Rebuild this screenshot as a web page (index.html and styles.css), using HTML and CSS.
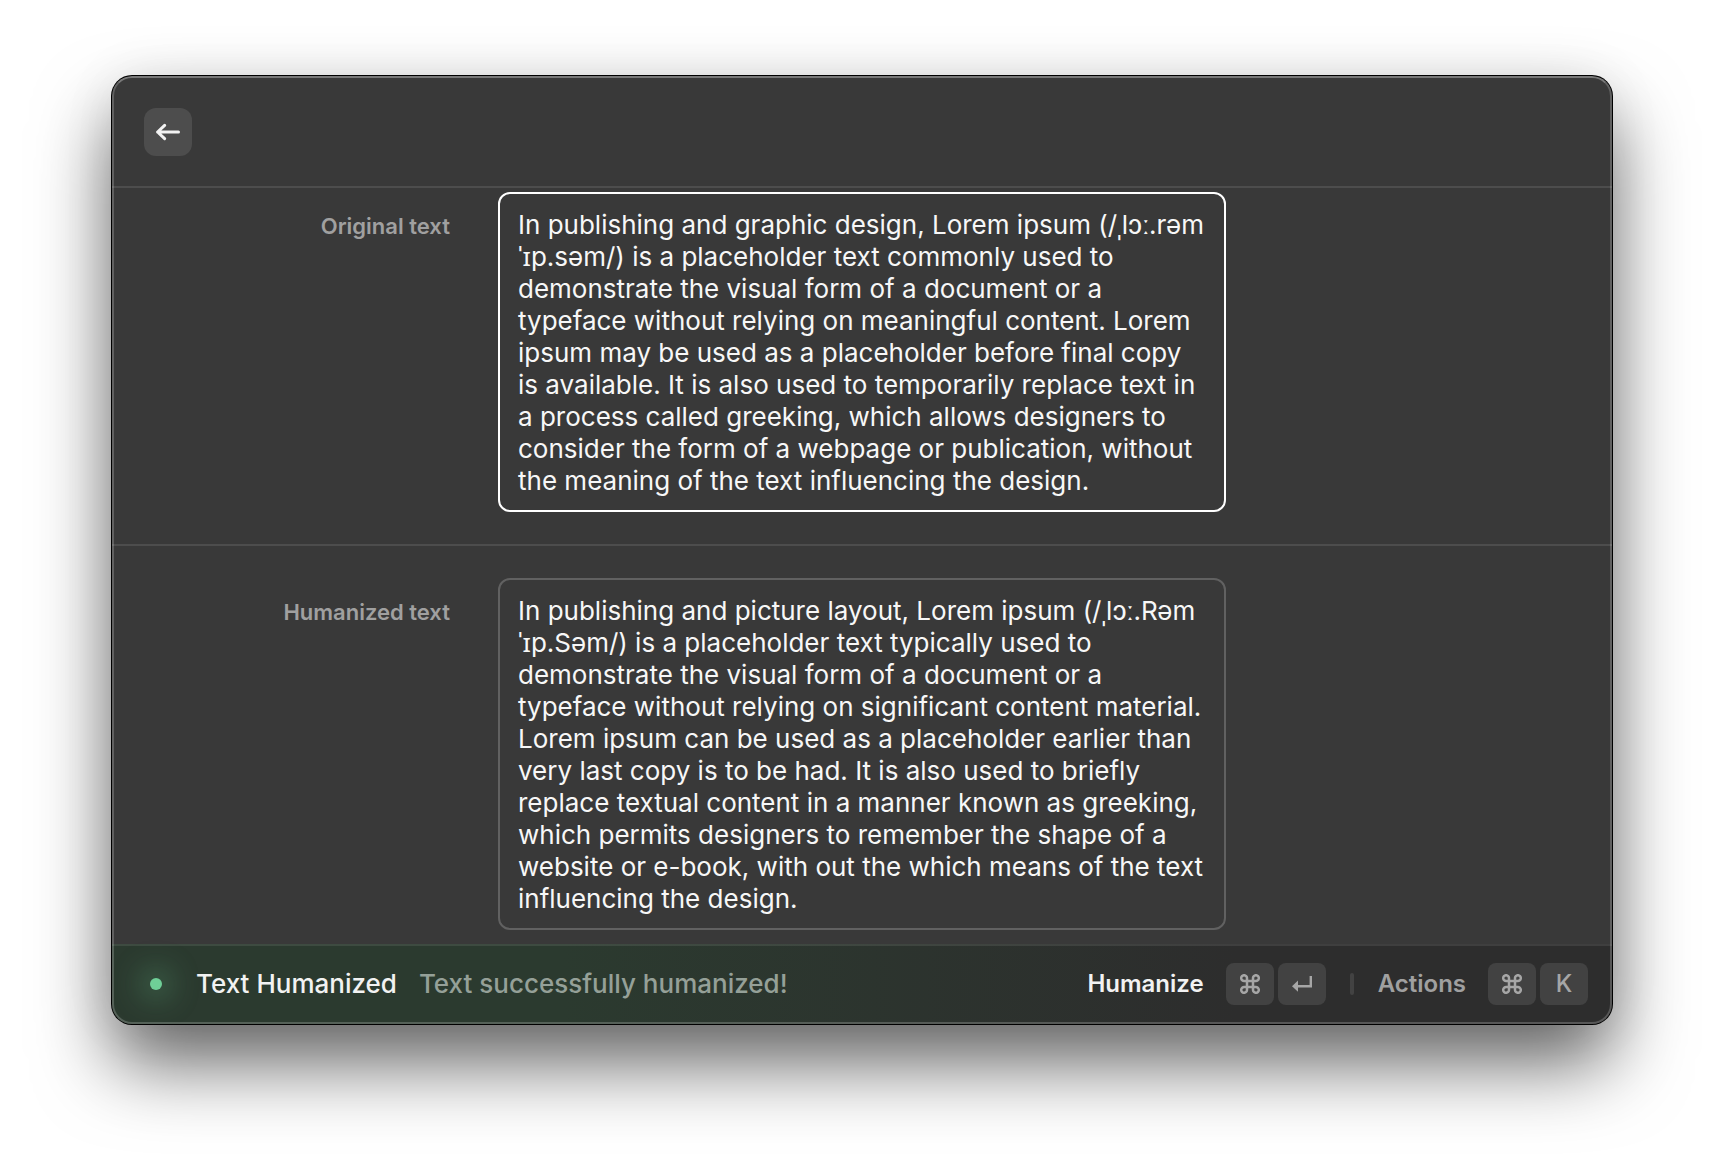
FILE: index.html
```html
<!DOCTYPE html>
<html lang="en">
<head>
  <meta charset="utf-8">
  <title>Humanize Text</title>
  <link rel="stylesheet" href="styles.css">
</head>
<body>
  <svg class="symbols" aria-hidden="true">
    <symbol id="command" viewBox="0 0 20 20">
      <path d="M7 7H13V13H7ZM7 7H4.4A2.9 2.9 0 1 1 7 4.2ZM13 7V4.2A2.9 2.9 0 1 1 15.6 7ZM13 13H15.6A2.9 2.9 0 1 1 13 15.8ZM7 13V15.8A2.9 2.9 0 1 1 4.4 13Z" fill="none" stroke="currentColor" stroke-width="2.5"/>
    </symbol>
  </svg>
  <div class="window">
    <header class="toolbar">
      <button class="back" type="button" aria-label="Back">
        <svg viewBox="0 0 24 24" width="24" height="24" fill="none" stroke="currentColor" stroke-width="3" stroke-linecap="round" stroke-linejoin="round"><path d="M22.5 12H1.6M8.6 5.4L1.6 12L8.6 18.6"/></svg>
      </button>
    </header>
    <main class="form">
      <div class="row">
        <label class="label" for="original">Original text</label>
        <textarea class="field field-focused" id="original" rows="9" spellcheck="false">In publishing and graphic design, Lorem ipsum (/ˌlɔː.rəm ˈɪp.səm/) is a placeholder text commonly used to demonstrate the visual form of a document or a typeface without relying on meaningful content. Lorem ipsum may be used as a placeholder before final copy is available. It is also used to temporarily replace text in a process called greeking, which allows designers to consider the form of a webpage or publication, without the meaning of the text influencing the design.</textarea>
      </div>
      <div class="row">
        <label class="label" for="humanized">Humanized text</label>
        <textarea class="field" id="humanized" rows="10" spellcheck="false">In publishing and picture layout, Lorem ipsum (/ˌlɔː.Rəm ˈɪp.Səm/) is a placeholder text typically used to demonstrate the visual form of a document or a typeface without relying on significant content material. Lorem ipsum can be used as a placeholder earlier than very last copy is to be had. It is also used to briefly replace textual content in a manner known as greeking, which permits designers to remember the shape of a website or e-book, with out the which means of the text influencing the design.</textarea>
      </div>
    </main>
    <footer class="statusbar">
      <span class="dot"></span>
      <span class="title">Text Humanized</span>
      <span class="message">Text successfully humanized!</span>
      <button class="action action-primary" type="button">
        <span class="action-name">Humanize</span>
        <span class="keys">
          <kbd class="key"><svg width="20" height="20"><use href="#command"/></svg></kbd>
          <kbd class="key"><svg viewBox="0 0 20 16" width="20" height="16"><path d="M18.8 0V10.2H5" fill="none" stroke="currentColor" stroke-width="2.4"/><path d="M0 10.2L6 4.6V15.8Z" fill="currentColor"/></svg></kbd>
        </span>
      </button>
      <span class="separator"></span>
      <button class="action" type="button">
        <span class="action-name">Actions</span>
        <span class="keys">
          <kbd class="key"><svg width="20" height="20"><use href="#command"/></svg></kbd>
          <kbd class="key">K</kbd>
        </span>
      </button>
    </footer>
  </div>
</body>
</html>
```
FILE: styles.css
```css
* {
  box-sizing: border-box;
}

body {
  margin: 0;
  padding: 76px 112px 148px;
  background: #fff;
  color: #f2f2f2;
  font-family: Inter, "Noto Sans", sans-serif;
}

button,
textarea,
kbd {
  font-family: inherit;
}

.symbols {
  display: none;
}

.window {
  position: relative;
  display: flex;
  flex-direction: column;
  overflow: hidden;
  border-radius: 20px;
  background: #393939;
  box-shadow: 0 0 0 1px #000, 0 0 60px rgba(0, 0, 0, 0.06), 0 40px 76px rgba(0, 0, 0, 0.6);
}

/* light rim drawn over the bars and the form */
.window::after {
  content: "";
  position: absolute;
  inset: 0;
  border: 2px solid rgba(255, 255, 255, 0.2);
  border-top-color: rgba(255, 255, 255, 0.32);
  border-radius: inherit;
  pointer-events: none;
}

.toolbar {
  display: flex;
  align-items: center;
  padding: 32px;
  padding-bottom: 30px;
  border-bottom: 2px solid #4d4d4d;
}

.back {
  display: flex;
  align-items: center;
  justify-content: center;
  width: 48px;
  height: 48px;
  padding: 0;
  border: 0;
  border-radius: 12px;
  background: #4d4d4d;
  color: #f2f2f2;
}

.row {
  display: grid;
  grid-template-columns: 1fr minmax(0, 728px) 1fr;
  column-gap: 48px;
  padding: 32px 0;
}

.row:first-child {
  padding-top: 4px;
  border-bottom: 2px solid #4d4d4d;
}

.row:last-child {
  padding-bottom: 14px;
}

.label {
  padding-top: 18px;
  color: #a0a0a0;
  font-size: 22px;
  font-weight: 600;
  line-height: 32px;
  text-align: right;
}

.field {
  display: block;
  width: 100%;
  margin: 0;
  padding: 15px 18px 13px;
  border: 2px solid #616161;
  border-radius: 12px;
  outline: 0;
  overflow: hidden;
  resize: none;
  background: transparent;
  color: #f7f7f7;
  font-size: 26px;
  line-height: 32px;
}

.field-focused {
  border-color: #fff;
}

.statusbar {
  display: flex;
  align-items: center;
  height: 80px;
  padding: 0 24px 2px 38px;
  border-top: 2px solid rgba(255, 255, 255, 0.09);
  background: linear-gradient(90deg, #2b3a2f 0%, #2b3a2f 30%, #2d2d2d 75%);
  font-size: 26px;
  font-weight: 500;
  line-height: 32px;
}

.dot {
  width: 12px;
  height: 12px;
  margin-right: 34px;
  border-radius: 50%;
  background: #6fcf97;
  box-shadow: 0 0 30px 8px rgba(111, 207, 151, 0.36);
}

.title {
  margin-right: 22px;
}

.message {
  margin-right: auto;
  color: #95a098;
}

.action {
  display: flex;
  align-items: center;
  gap: 22px;
  padding: 0;
  border: 0;
  background: none;
  color: #a0a0a0;
  font-size: 24px;
  font-weight: 600;
  line-height: 32px;
}

.action-primary {
  color: #f2f2f2;
}

.keys {
  display: flex;
  gap: 4px;
}

.key {
  display: flex;
  align-items: center;
  justify-content: center;
  width: 48px;
  height: 42px;
  border-radius: 8px;
  background: #424242;
  color: #a6a6a6;
  font-size: 24px;
  font-weight: 500;
}

.separator {
  width: 4px;
  height: 22px;
  margin: 0 24px;
  border-radius: 2px;
  background: #424242;
}
```
